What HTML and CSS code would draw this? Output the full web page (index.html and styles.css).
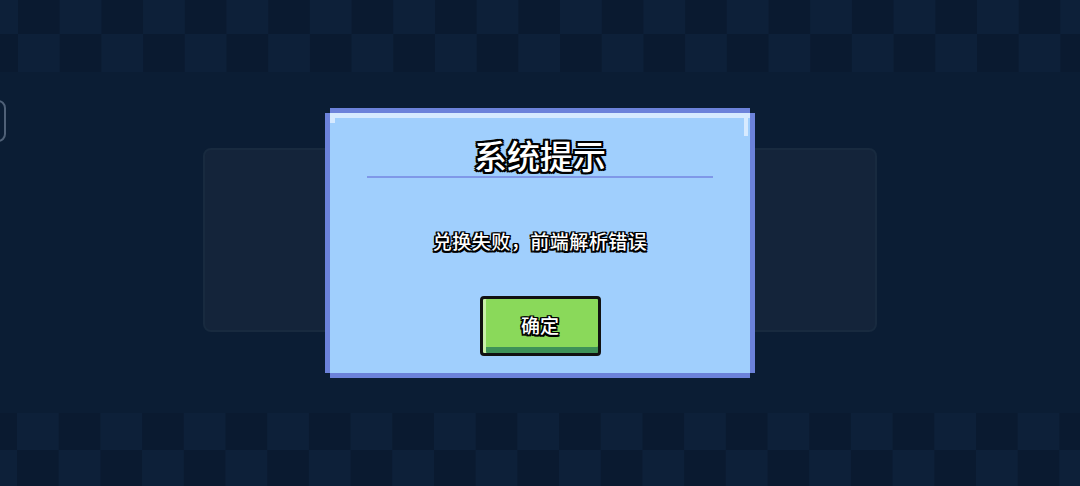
FILE: index.html
```html
<!DOCTYPE html>
<html lang="zh-CN">
<head>
    <meta charset="UTF-8">
    <meta name="viewport" content="width=device-width, initial-scale=1.0">
    <title>系统提示</title>
    <link rel="stylesheet" href="styles.css">
</head>
<body>
    <div class="stage">
        <div class="band band-top"></div>

        <div class="middle">
            <div class="side-tab"></div>
            <div class="panel"></div>
        </div>

        <div class="band band-bottom"></div>

        <!-- 弹窗 -->
        <div class="overlay">
            <div class="dialog">
                <div class="dialog-inner">
                    <span class="shine-left"></span>
                    <span class="shine-right"></span>
                    <h2 class="title outline">系统提示</h2>
                    <div class="divider"></div>
                    <p class="message outline-thin">兑换失败，前端解析错误</p>
                    <button class="btn-ok">
                        <span class="outline-thin">确定</span>
                    </button>
                </div>
            </div>
        </div>
    </div>
</body>
</html>
```

FILE: styles.css
```css
* {
    box-sizing: border-box;
}
body {
    margin: 0;
    background: #0b1d34;
    font-family: "Noto Sans CJK SC", "Noto Sans", sans-serif;
    overflow: hidden;
}
.stage {
    position: relative;
    width: 1080px;
    height: 486px;
    display: flex;
    flex-direction: column;
    background: #0b1d34;
}

/* 棋盘格背景条 */
.band {
    background-image:
        conic-gradient(#0d2039 0 25%, #0a1a30 0 50%, #0d2039 0 75%, #0a1a30 0);
    background-size: 83.4px 76px;
}
.band-top {
    height: 72px;
    background-position: 18px -4px;
}
.band-bottom {
    height: 73px;
    background-position: 17px -3px;
    background-image:
        conic-gradient(#0a1a30 0 25%, #0d2039 0 50%, #0a1a30 0 75%, #0d2039 0);
    background-size: 83.4px 80px;
}
.middle {
    flex: 1;
    padding-top: 28px;
}
.side-tab {
    width: 44px;
    height: 42px;
    margin-left: -38px;
    border: 2px solid #4f6077;
    border-radius: 8px;
}
.panel {
    width: 674px;
    height: 184px;
    margin: 6px 0 0 203px;
    background: #14243a;
    border: 2px solid #182a3f;
    border-radius: 8px;
}

/* 弹窗 */
.overlay {
    position: absolute;
    inset: 0;
    display: flex;
    align-items: center;
    justify-content: center;
}
.dialog {
    width: 430px;
    height: 270px;
    padding: 5px;
    background: #6c82da;
    clip-path: polygon(
        5px 0, calc(100% - 5px) 0, calc(100% - 5px) 5px, 100% 5px,
        100% calc(100% - 5px), calc(100% - 5px) calc(100% - 5px), calc(100% - 5px) 100%,
        5px 100%, 5px calc(100% - 5px), 0 calc(100% - 5px), 0 5px, 5px 5px);
}
.dialog-inner {
    position: relative;
    height: 100%;
    background: #a0cffd;
    border-top: 5px solid #d6eaff;
    display: flex;
    flex-direction: column;
    align-items: center;
    padding-top: 19px;
}
.shine-left {
    position: absolute;
    left: 0;
    top: 0;
    width: 5px;
    height: 5px;
    background: #d6eaff;
}
.shine-right {
    position: absolute;
    right: 2px;
    top: 0;
    width: 4px;
    height: 18px;
    background: #d6eaff;
}
.outline {
    color: #fff;
    text-shadow:
        -2px -2px 0 #000, 0 -2px 0 #000, 2px -2px 0 #000,
        -2px 0 0 #000, 2px 0 0 #000,
        -2px 2px 0 #000, 0 2px 0 #000, 2px 2px 0 #000;
}
.outline-thin {
    color: #fff;
    text-shadow:
        -1.5px -1.5px 0 #000, 0 -1.5px 0 #000, 1.5px -1.5px 0 #000,
        -1.5px 0 0 #000, 1.5px 0 0 #000,
        -1.5px 1.5px 0 #000, 0 1.5px 0 #000, 1.5px 1.5px 0 #000;
}
.title {
    margin: 0;
    font-size: 33px;
    line-height: 36px;
    font-weight: 500;
}
.divider {
    width: 346px;
    height: 2px;
    margin-top: 3px;
    background: #7f98e8;
}
.message {
    margin: 51px 0 0;
    font-size: 19px;
    line-height: 24px;
    font-weight: 500;
    letter-spacing: 0.5px;
}
.btn-ok {
    margin-top: 43px;
    width: 121px;
    height: 60px;
    padding: 0;
    border: 3px solid #111;
    border-radius: 4px;
    background: #8ad95a;
    box-shadow:
        inset 3px 0 0 #c8f0a8,
        inset 0 -6px 0 #3e9258;
    font-family: inherit;
    font-size: 19px;
    font-weight: 500;
    cursor: pointer;
}
.btn-ok span {
    display: block;
    margin-top: -4px;
}
```
